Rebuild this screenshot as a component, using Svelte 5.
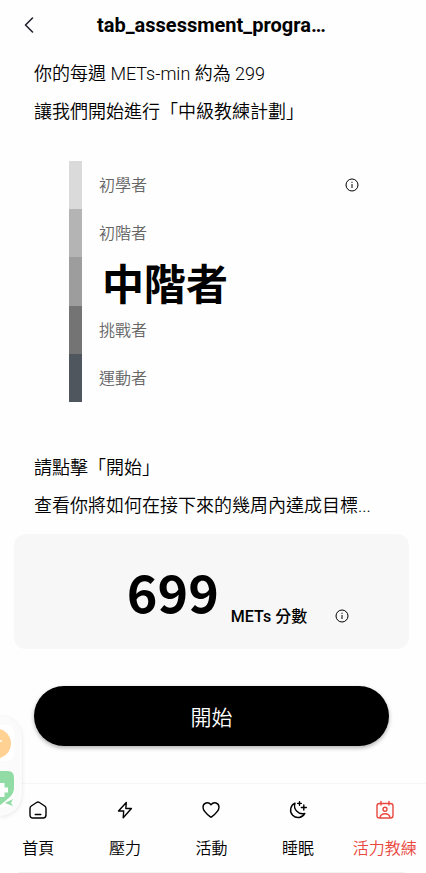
<script>
  const levels = [
    { name: '初學者', color: '#dadada' },
    { name: '初階者', color: '#b4b4b4' },
    { name: '中階者', color: '#9d9d9d', current: true },
    { name: '挑戰者', color: '#747474' },
    { name: '運動者', color: '#4f565e' }
  ];
  const tabs = [
    { name: '首頁', icon: 'home' },
    { name: '壓力', icon: 'bolt' },
    { name: '活動', icon: 'heart' },
    { name: '睡眠', icon: 'moon' },
    { name: '活力教練', icon: 'coach', active: true }
  ];
</script>

{#snippet info()}
  <svg width="14" height="14" viewBox="0 0 14 14" fill="none" stroke="currentColor" aria-hidden="true">
    <circle cx="7" cy="7" r="6" stroke-width="1" />
    <path d="M7 6v4M7 3.8v1.1" stroke-width="1" />
  </svg>
{/snippet}

<div class="page">
  <header>
    <button class="back" aria-label="返回">
      <svg width="10" height="18" viewBox="0 0 10 18" fill="none" stroke="#22222f" stroke-width="1.6" stroke-linecap="round" stroke-linejoin="round"><path d="M8.5 2 1.5 9l7 7" /></svg>
    </button>
    <h1>tab_assessment_progra…</h1>
  </header>

  <main>
    <section class="copy">
      <p>你的每週 METs-min 約為 299</p>
      <p>讓我們開始進行「中級教練計劃」</p>
    </section>

    <section class="levels">
      <ul>
        {#each levels as level}
          <li class:current={level.current}>
            <span class="bar" style="background: {level.color}"></span>
            <span class="level">{level.name}</span>
          </li>
        {/each}
      </ul>
      <button class="info" aria-label="等級說明">{@render info()}</button>
    </section>

    <section class="copy">
      <p>請點擊「開始」</p>
      <p>查看你將如何在接下來的幾周內達成目標...</p>
    </section>

    <section class="score">
      <strong>699</strong>
      <span>METs 分數</span>
      <button class="info" aria-label="分數說明">{@render info()}</button>
    </section>

    <button class="start">開始</button>
  </main>

  <nav>
    {#each tabs as tab}
      <a href="#{tab.icon}" class:active={tab.active}>
        <svg width="20" height="20" viewBox="0 0 20 20" fill="none" stroke="currentColor" stroke-width="1.4" stroke-linecap="round" stroke-linejoin="round" aria-hidden="true">
          {#if tab.icon === 'home'}
            <path d="M8.6 2.5 3.3 6Q2 7 2 8.4v6.3Q2 18 5 18h10q3 0 3-3.3V8.4Q18 7 16.7 6l-5.3-3.5Q10 1.6 8.6 2.5ZM7.2 14.5h5.6" />
          {:else if tab.icon === 'bolt'}
            <path d="M11.3 2.5 3.5 11h5.2l-.5 6.8 8.2-9.3h-5.6Z" />
          {:else if tab.icon === 'heart'}
            <path d="M10 17.3C7 15 2 11.5 2 7.2 2 2.8 7.3 1.2 10 4.7c2.7-3.5 8-1.9 8 2.5 0 4.3-5 7.8-8 10.1Z" />
          {:else if tab.icon === 'moon'}
            <path d="M7 3.2a7.5 7.5 0 1 0 9.8 10.2A8 8 0 0 1 7 3.2ZM11.5 1.6v3.6M9.7 3.4h3.6M15.8 5v5M13.3 7.5h5" />
          {:else}
            <path d="M4.5 3.5h11q2.5 0 2.5 2.5v9.5q0 2.5-2.5 2.5h-11Q2 18 2 15.5V6q0-2.5 2.5-2.5ZM6 1.5V5M14 1.5V5M5 17.8q.5-4 5-4t5 4" />
            <circle cx="10" cy="9.2" r="2" />
          {/if}
        </svg>
        <span>{tab.name}</span>
      </a>
    {/each}
  </nav>

  <aside aria-label="捷徑">
    <svg width="26" height="100" viewBox="0 0 26 100" aria-hidden="true">
      <rect x="-20" y="9" width="34" height="36" rx="7" fill="#fff" />
      <circle cx="-4" cy="27.5" r="15" fill="#ffd193" />
      <path d="M-3 25h5" stroke="#fff" stroke-width="1.5" />
      <rect x="-20" y="55" width="34" height="36" rx="7" fill="#fff" />
      <path d="M-20 55H8q6 0 6 7v10q0 5-4 9L-1 90h-19Z" fill="#91dca5" />
      <path d="M2 67v14M-5 74H8" stroke="#fff" stroke-width="5" />
      <path d="m5 87 8-4-2 4 2 3Z" fill="#91dca5" />
    </svg>
  </aside>
</div>

<style>
  :global(body) {
    margin: 0;
    background: #fefefe;
  }
  .page {
    position: relative;
    overflow: hidden;
    padding-right: 3px;
    color: #000;
    font-family: Roboto, 'Noto Sans CJK TC', sans-serif;
  }
  button {
    padding: 0;
    border: 0;
    background: none;
    color: inherit;
    font: inherit;
  }
  svg {
    display: block;
  }
  header {
    display: grid;
    grid-template-columns: 73px 1fr 60px;
    align-items: center;
    height: 50px;
    padding: 0 24px;
  }
  .back {
    justify-self: start;
  }
  h1 {
    margin: 0;
    font-size: 20px;
    font-weight: 700;
    line-height: 28px;
    white-space: nowrap;
  }
  .copy {
    padding: 5px 34px 0;
  }
  .copy p {
    margin: 0;
    font-size: 18px;
    font-weight: 350;
    line-height: 38px;
    white-space: nowrap;
  }
  .levels {
    display: flex;
    justify-content: space-between;
    align-items: flex-start;
    margin: 30px 64px 42px 69px;
  }
  ul {
    margin: 0;
    padding: 0;
    list-style: none;
  }
  li {
    display: flex;
    align-items: center;
    gap: 17px;
    height: 48px;
  }
  .bar {
    width: 13px;
    height: 100%;
  }
  .level {
    padding-top: 2px;
    color: #666;
    font-size: 16px;
    font-weight: 350;
    line-height: 24px;
  }
  li.current {
    gap: 20px;
    height: 49px;
  }
  .current .level {
    padding-top: 8px;
    color: #000;
    font-size: 42px;
    font-weight: 700;
    line-height: 48px;
  }
  .levels .info {
    margin-top: 17px;
  }
  .score {
    display: flex;
    justify-content: center;
    align-items: flex-end;
    gap: 12px;
    box-sizing: border-box;
    height: 115px;
    margin: 9px 14px 37px;
    padding: 0 0 22px 53px;
    border-radius: 12px;
    background: #f7f7f7;
  }
  .score strong {
    font-family: 'Noto Sans CJK TC', sans-serif;
    font-size: 52px;
    font-weight: 700;
    line-height: 72px;
  }
  .score span {
    font-size: 16px;
    font-weight: 500;
    line-height: 20px;
  }
  .score .info {
    margin: 0 0 4px 16px;
  }
  .start {
    display: block;
    width: calc(100% - 68px);
    height: 60px;
    margin: 0 34px;
    border-radius: 30px;
    background: #000;
    box-shadow: 0 2px 4px rgb(0 0 0 / 30%);
    color: #fff;
    font-size: 21px;
    font-weight: 350;
  }
  nav {
    display: grid;
    grid-template-columns: repeat(5, 1fr);
    margin: 37px -5px 0;
    border-top: 1px solid #f6f6f6;
  }
  nav::after {
    grid-column: 1 / -1;
    height: 1px;
    margin: 0 24px;
    background: #f1f1f1;
    content: '';
  }
  nav a {
    display: flex;
    flex-direction: column;
    align-items: center;
    gap: 16px;
    padding: 16px 0 11px;
    color: #000;
    font-size: 16px;
    font-weight: 350;
    line-height: 25px;
    text-decoration: none;
    white-space: nowrap;
  }
  nav a.active {
    color: #e9483f;
  }
  aside {
    position: absolute;
    top: 716px;
    left: 0;
    width: 22px;
    overflow: hidden;
    border-radius: 0 22px 22px 0;
    background: #fbfbfb;
    box-shadow: 0 1px 4px rgb(0 0 0 / 10%);
  }
</style>
